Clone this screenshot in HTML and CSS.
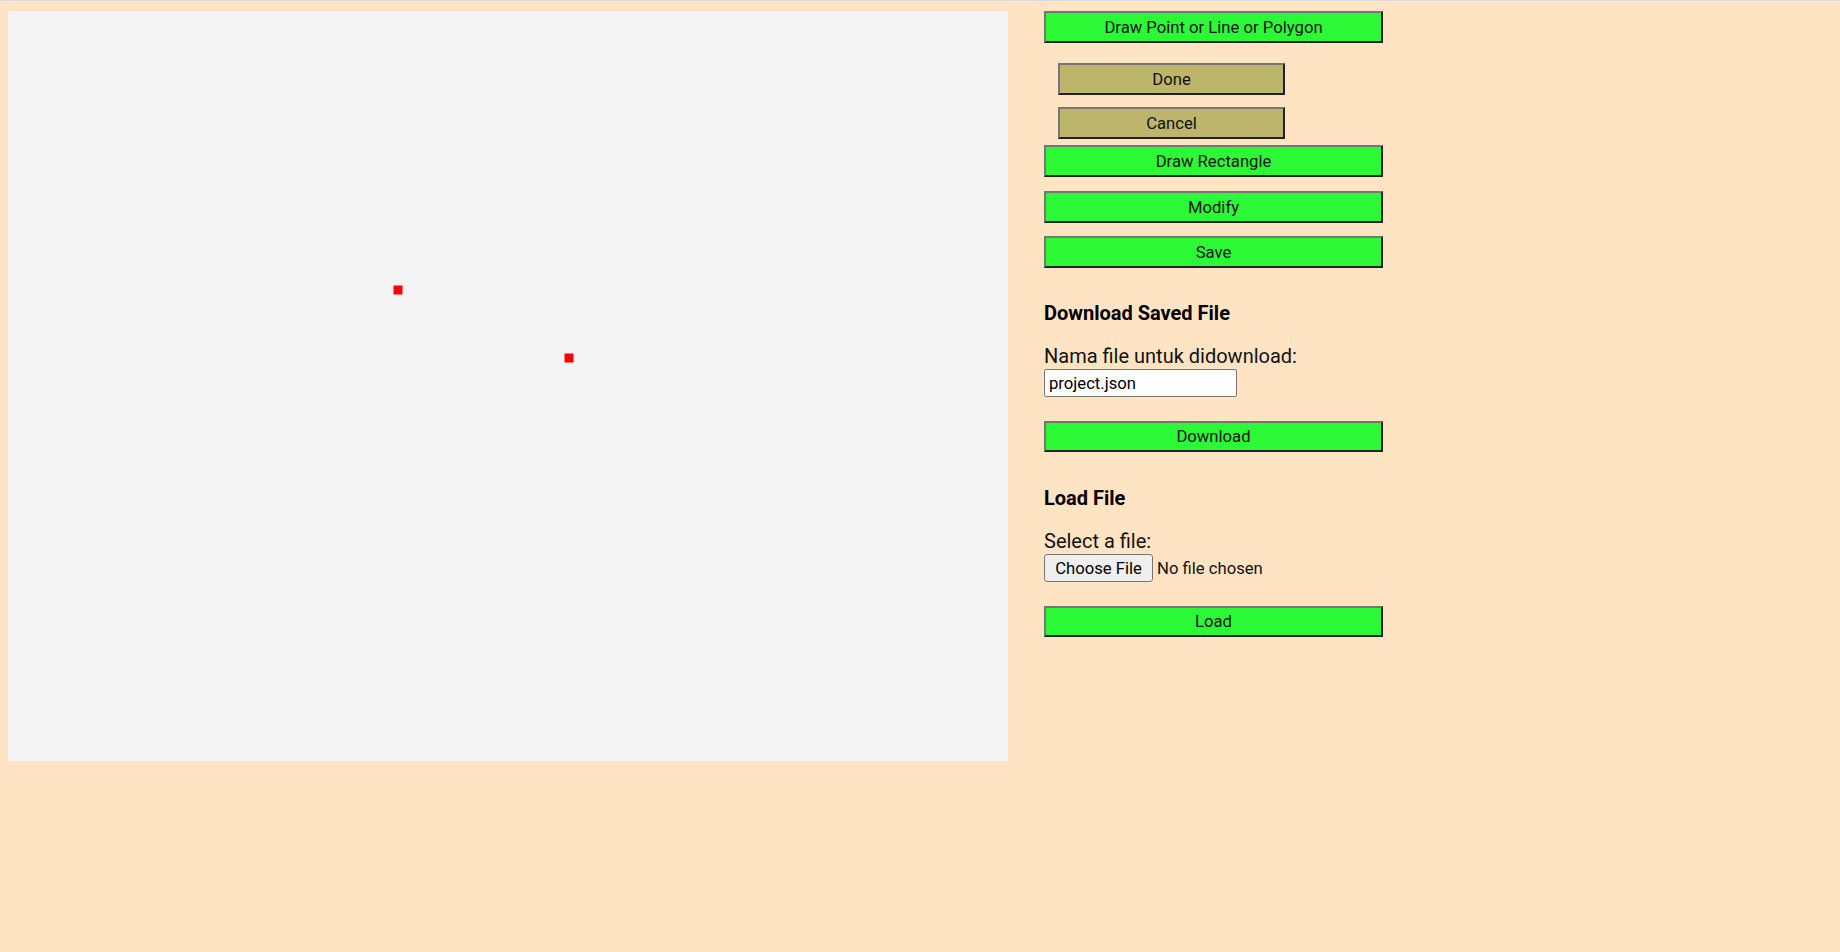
FILE: index.html
```html
<!DOCTYPE html>
<html lang="id">
<head>
<meta charset="utf-8">
<title>Map Editor</title>
<link rel="stylesheet" href="styles.css">
</head>
<body>
<div class="app">
  <div class="canvas">
    <svg class="canvas-svg" width="1000" height="750" viewBox="0 0 1000 750">
      <rect x="385.5" y="274.5" width="9" height="9" fill="#ff0000"/>
      <rect x="556.5" y="342.5" width="9" height="9" fill="#ff0000"/>
    </svg>
  </div>
  <div class="panel">
    <button class="btn btn-green btn-draw">Draw Point or Line or Polygon</button>
    <button class="btn btn-khaki btn-done">Done</button>
    <button class="btn btn-khaki btn-cancel">Cancel</button>
    <button class="btn btn-green btn-rect">Draw Rectangle</button>
    <button class="btn btn-green btn-modify">Modify</button>
    <button class="btn btn-green btn-save">Save</button>

    <h4 class="section-title title-download">Download Saved File</h4>
    <label class="field-label label-name">Nama file untuk didownload:</label>
    <input class="text-input" type="text" value="project.json">
    <button class="btn btn-green btn-download">Download</button>

    <h4 class="section-title title-load">Load File</h4>
    <label class="field-label label-select">Select a file:</label>
    <div class="file-row">
      <button class="file-btn">Choose File</button>
      <span class="file-status">No file chosen</span>
    </div>
    <button class="btn btn-green btn-load">Load</button>
  </div>
</div>
</body>
</html>
```

FILE: styles.css
```css
html {
  background: #ffe4c4;
  border-top: 1px solid #dadada;
}

body {
  margin: 10px 8px 0;
  font-family: Roboto, "Liberation Sans", sans-serif;
  color: #111;
}

.app {
  display: flex;
  align-items: flex-start;
  gap: 36px;
}

.canvas {
  width: 1000px;
  height: 750px;
  background: #f4f4f4;
  flex: none;
}

.canvas-svg {
  display: block;
}

.panel {
  display: flex;
  flex-direction: column;
  align-items: flex-start;
  width: 339px;
}

.btn {
  box-sizing: border-box;
  width: 339px;
  height: 32px;
  padding: 0;
  margin: 0;
  font-family: Roboto, "Liberation Sans", sans-serif;
  font-size: 16.67px;
  color: #111;
  border-width: 2px;
  border-style: solid;
  border-color: #767676 #222 #222 #767676;
  cursor: pointer;
}

.btn-green {
  background: #2cf936;
}

.btn-khaki {
  background: #bdb56b;
  width: 227px;
  margin-left: 14px;
}

.btn-draw { margin-bottom: 20px; }
.btn-done { margin-bottom: 12px; }
.btn-cancel { margin-bottom: 6px; }
.btn-rect { margin-bottom: 14px; }
.btn-modify { margin-bottom: 13px; }
.btn-save { margin-bottom: 34px; }

.section-title {
  margin: 0 0 20px;
  font-size: 20px;
  line-height: 23px;
  font-weight: 700;
  color: #000;
}

.field-label {
  font-size: 20px;
  line-height: 23px;
  color: #111;
}

.label-name { margin-bottom: 1px; }

.text-input {
  box-sizing: border-box;
  width: 193px;
  height: 28px;
  margin: 0 0 24px;
  padding: 0 4px;
  font-family: Roboto, "Liberation Sans", sans-serif;
  font-size: 16.67px;
  color: #000;
  background: #fff;
  border: 1px solid #767676;
  border-radius: 2px;
}

.btn-download {
  height: 31px;
  margin-bottom: 35px;
}

.label-select { margin-bottom: 1px; }

.file-row {
  display: flex;
  align-items: center;
  gap: 4px;
  margin-bottom: 24px;
}

.file-btn {
  box-sizing: border-box;
  width: 109px;
  height: 28px;
  padding: 0;
  font-family: Roboto, "Liberation Sans", sans-serif;
  font-size: 16.67px;
  color: #000;
  background: #efefef;
  border: 1px solid #767676;
  border-radius: 3px;
}

.file-status {
  font-size: 16.67px;
  color: #111;
}

.btn-load {
  height: 31px;
}
```
